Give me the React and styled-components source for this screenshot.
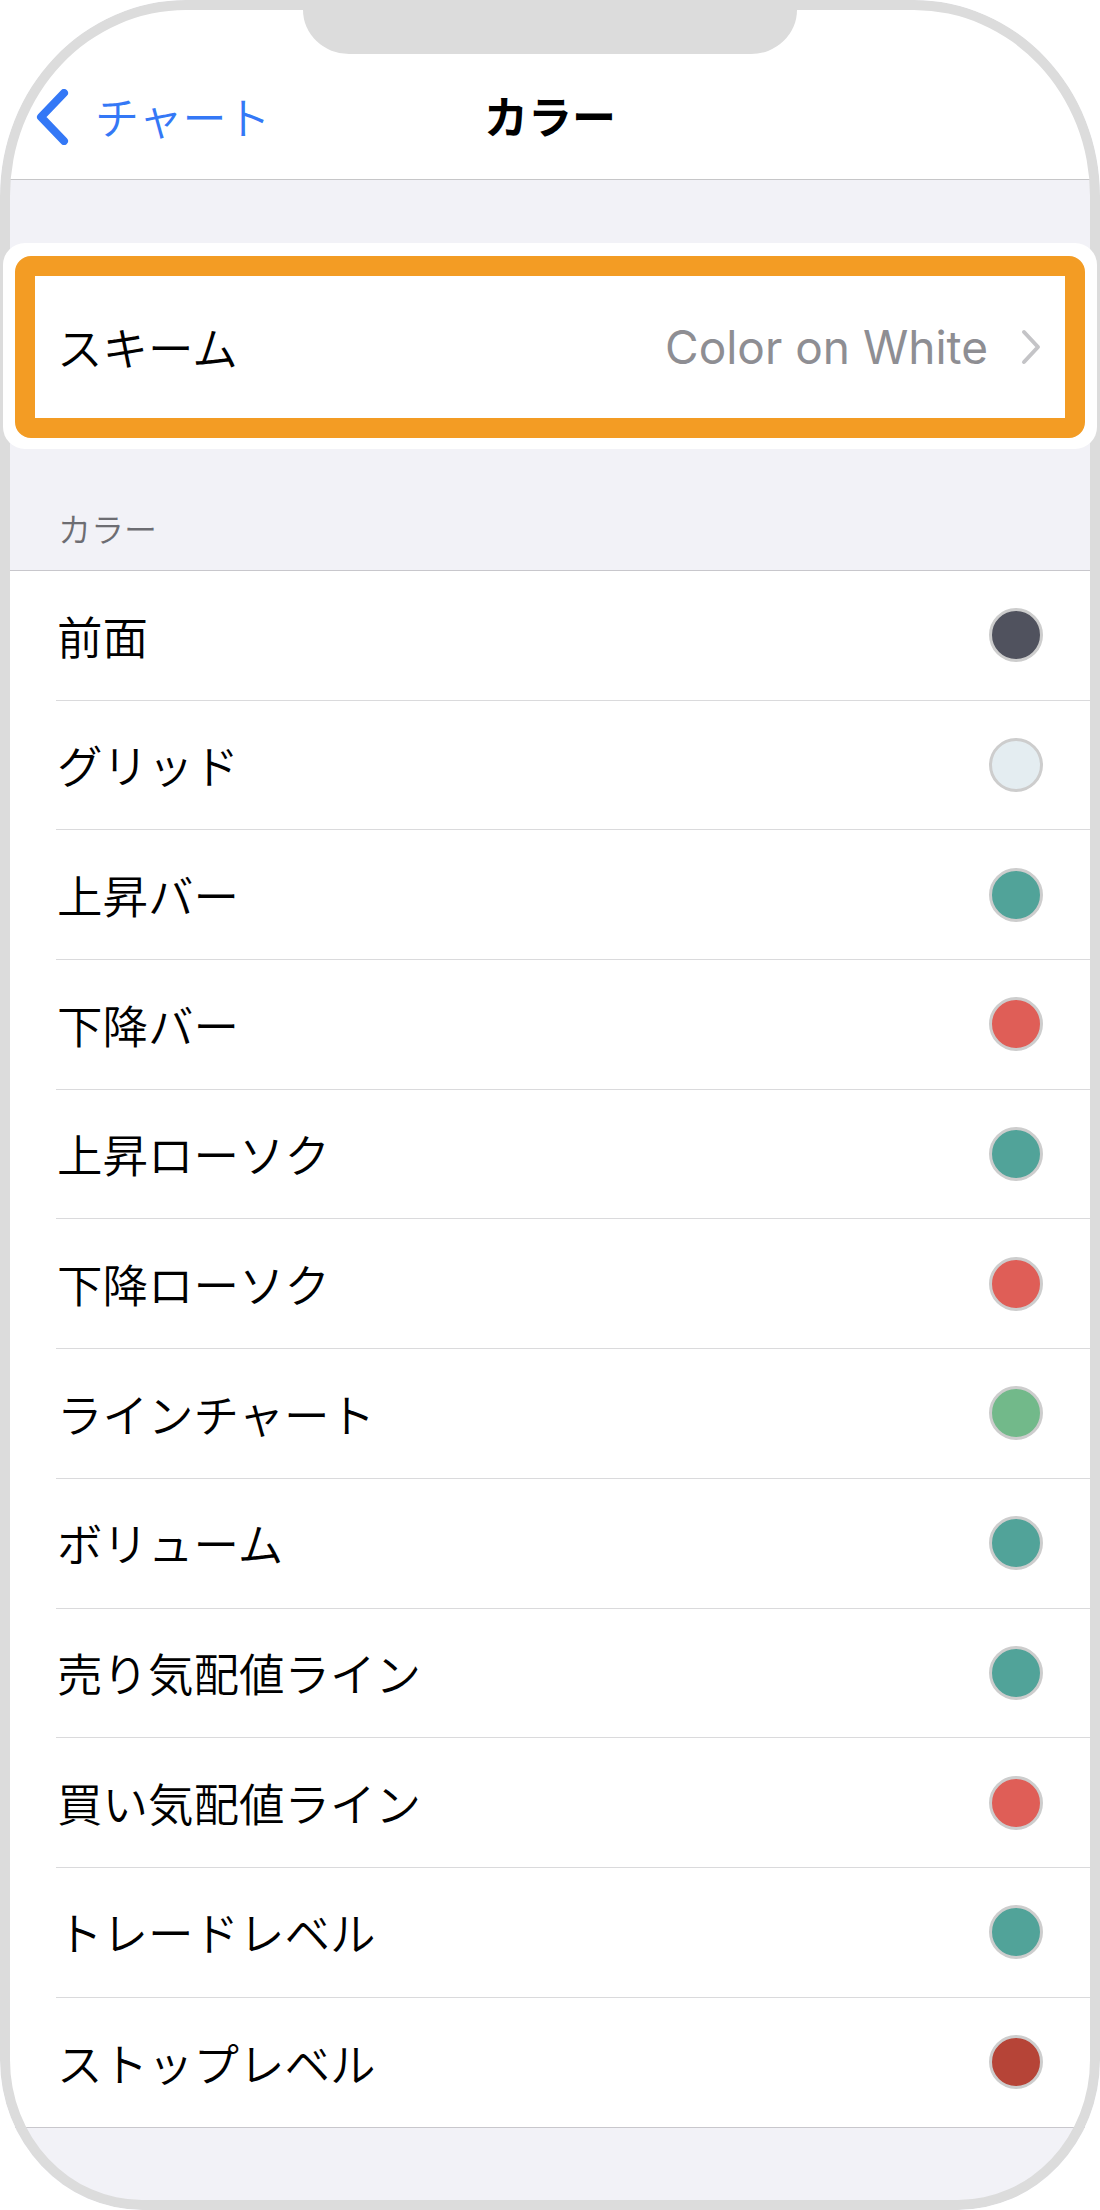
import styled, { createGlobalStyle } from 'styled-components';

const GlobalStyle = createGlobalStyle`
  html, body {
    margin: 0;
    padding: 0;
    background: #ffffff;
  }
  body {
    font-family: "Noto Sans CJK JP", "Noto Sans", sans-serif;
    -webkit-font-smoothing: antialiased;
  }
`;

const colors = [
  { label: '前面', color: '#50525e' },
  { label: 'グリッド', color: '#e4edf1' },
  { label: '上昇バー', color: '#51a399' },
  { label: '下降バー', color: '#df5e57' },
  { label: '上昇ローソク', color: '#51a399' },
  { label: '下降ローソク', color: '#df5e57' },
  { label: 'ラインチャート', color: '#72b98a' },
  { label: 'ボリューム', color: '#51a399' },
  { label: '売り気配値ライン', color: '#51a399' },
  { label: '買い気配値ライン', color: '#df5e57' },
  { label: 'トレードレベル', color: '#51a399' },
  { label: 'ストップレベル', color: '#b64437' },
];

function BackChevron() {
  return (
    <svg width="34" height="56" viewBox="0 0 34 56" fill="none">
      <path d="M29 4 L6 28 L29 52" stroke="#3478f6" strokeWidth="8" strokeLinecap="round" strokeLinejoin="round" />
    </svg>
  );
}

function DisclosureChevron() {
  return (
    <svg width="22" height="36" viewBox="0 0 22 36" fill="none">
      <path d="M4 3 L18 18 L4 33" stroke="#c4c4c7" strokeWidth="4" strokeLinecap="round" strokeLinejoin="round" />
    </svg>
  );
}

function App() {
  return (
    <>
      <GlobalStyle />
      <Frame>
        <Notch />
        <Screen>
          <NavBar>
            <BackButton>
              <BackChevron />
              <span>チャート</span>
            </BackButton>
            <NavTitle>カラー</NavTitle>
            <div />
          </NavBar>

          <Highlight>
            <HighlightRing>
              <SchemeRow>
                <RowLabel>スキーム</RowLabel>
                <SchemeValue>
                  <span>Color on White</span>
                  <DisclosureChevron />
                </SchemeValue>
              </SchemeRow>
            </HighlightRing>
          </Highlight>

          <SectionHeader>カラー</SectionHeader>
          <List>
            {colors.map((item, i) => (
              <Row key={item.label}>
                <RowInner $last={i === colors.length - 1}>
                  <RowLabel>{item.label}</RowLabel>
                  <Swatch $color={item.color} />
                </RowInner>
              </Row>
            ))}
          </List>
          <BottomFill />
        </Screen>
      </Frame>
    </>
  );
}

const Frame = styled.div`
  position: relative;
  width: 1100px;
  height: 2210px;
  box-sizing: border-box;
  padding: 10px;
  border-radius: 186px 186px 142px 142px / 196px 196px 150px 150px;
  overflow: hidden;
  background: #f2f2f7;
  &::after {
    content: '';
    position: absolute;
    inset: 0;
    border: 10px solid #dcdcdc;
    border-radius: inherit;
    pointer-events: none;
    z-index: 2;
  }
`;

const Notch = styled.div`
  position: absolute;
  top: 0;
  left: 303px;
  width: 494px;
  height: 54px;
  background: #dcdcdc;
  border-radius: 0 0 46px 46px / 0 0 44px 44px;
  z-index: 2;
`;

const Screen = styled.div`
  display: flex;
  flex-direction: column;
  height: 100%;
`;

const NavBar = styled.div`
  height: 170px;
  box-sizing: border-box;
  padding-top: 44px;
  background: #ffffff;
  border-bottom: 1px solid #c6c6c8;
  display: grid;
  grid-template-columns: 1fr auto 1fr;
  align-items: center;
`;

const BackButton = styled.div`
  display: flex;
  align-items: center;
  gap: 26px;
  padding-left: 25px;
  color: #3478f6;
  font-size: 44px;
  font-weight: 350;
  line-height: 1;
  span {
    margin-top: -2px;
  }
`;

const NavTitle = styled.div`
  font-size: 44px;
  font-weight: 700;
  color: #000000;
  line-height: 1;
  margin-top: -4px;
`;

const Highlight = styled.div`
  position: relative;
  z-index: 3;
  margin: 63px -7px 0;
  padding: 13px 12px 11px;
  background: #ffffff;
  border-radius: 22px;
`;

const HighlightRing = styled.div`
  border: 20px solid #f39c24;
  border-radius: 16px;
  background: #ffffff;
`;

const SchemeRow = styled.div`
  height: 142px;
  display: flex;
  align-items: center;
  justify-content: space-between;
  padding: 0 23px 0 22px;
`;

const RowLabel = styled.span`
  font-size: 45.5px;
  font-weight: 350;
  line-height: 1;
  color: #000000;
`;

const SchemeValue = styled.div`
  display: flex;
  align-items: center;
  gap: 32px;
  span {
    font-family: Inter, "Liberation Sans", sans-serif;
    font-size: 46px;
    color: #8e8e93;
    line-height: 1;
  }
`;

const SectionHeader = styled.div`
  height: 121px;
  box-sizing: border-box;
  display: flex;
  align-items: flex-end;
  padding: 0 0 22px 48px;
  font-size: 33px;
  font-weight: 350;
  line-height: 40px;
  color: #6d6d72;
`;

const List = styled.div`
  background: #ffffff;
  border-top: 1px solid #c8c7cc;
  border-bottom: 1px solid #c8c7cc;
`;

const Row = styled.div`
  padding-left: 46px;
`;

const RowInner = styled.div`
  height: 129.7px;
  box-sizing: border-box;
  display: flex;
  align-items: center;
  justify-content: space-between;
  padding: 0 47px 0 1px;
  border-bottom: ${(p) => (p.$last ? 'none' : '1px solid #dadadc')};
`;

const Swatch = styled.div`
  width: 54px;
  height: 54px;
  box-sizing: border-box;
  border-radius: 50%;
  border: 3px solid #cdcdcd;
  background: ${(p) => p.$color};
`;

const BottomFill = styled.div`
  flex: 1;
  background: #f2f2f7;
`;

export default App;
